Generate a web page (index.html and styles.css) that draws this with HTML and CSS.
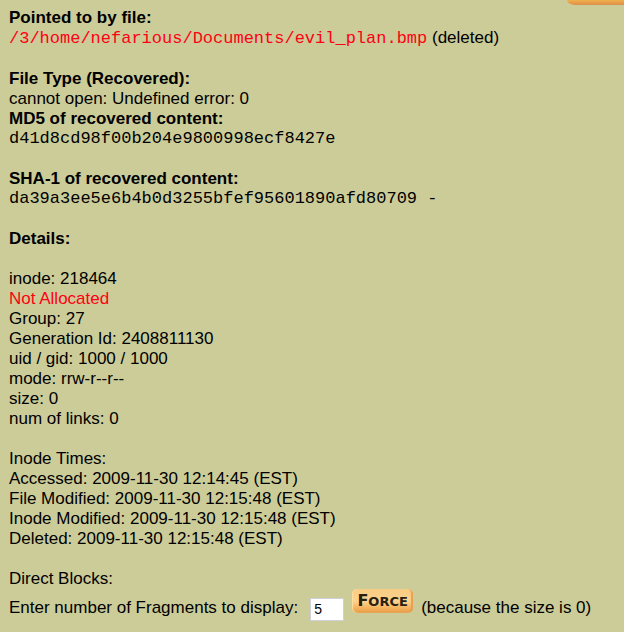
FILE: index.html
```html
<!DOCTYPE html>
<html lang="en">
<head>
<meta charset="utf-8">
<meta name="viewport" content="width=device-width, initial-scale=1">
<title>Inode 218464</title>
<link rel="stylesheet" href="styles.css">
</head>
<body>
<div class="tab-edge" aria-hidden="true"></div>
<main class="report">
  <section class="group">
    <h2>Pointed to by file:</h2>
    <p><span class="mono alert">/3/home/nefarious/Documents/evil_plan.bmp</span> (deleted)</p>
  </section>
  <section class="group">
    <h2>File Type (Recovered):</h2>
    <p>cannot open: Undefined error: 0</p>
    <h2>MD5 of recovered content:</h2>
    <p class="mono">d41d8cd98f00b204e9800998ecf8427e</p>
  </section>
  <section class="group">
    <h2>SHA-1 of recovered content:</h2>
    <p class="mono">da39a3ee5e6b4b0d3255bfef95601890afd80709 -</p>
  </section>
  <h2 class="group">Details:</h2>
  <section class="group">
    <p>inode: 218464</p>
    <p class="alert">Not Allocated</p>
    <p>Group: 27</p>
    <p>Generation Id: 2408811130</p>
    <p>uid / gid: 1000 / 1000</p>
    <p>mode: rrw-r--r--</p>
    <p>size: 0</p>
    <p>num of links: 0</p>
  </section>
  <section class="group">
    <p>Inode Times:</p>
    <p>Accessed: 2009-11-30 12:14:45 (EST)</p>
    <p>File Modified: 2009-11-30 12:15:48 (EST)</p>
    <p>Inode Modified: 2009-11-30 12:15:48 (EST)</p>
    <p>Deleted: 2009-11-30 12:15:48 (EST)</p>
  </section>
  <section>
    <p>Direct Blocks:</p>
    <form class="force-form">
      <label for="fragments">Enter number of Fragments to display:</label>
      <input id="fragments" class="count" type="text" value="5">
      <button class="force" type="button">F<span class="small-capitals">ORCE</span></button>
      <span>(because the size is 0)</span>
    </form>
  </section>
</main>
</body>
</html>
```
FILE: styles.css
```css
* {
  box-sizing: border-box;
}

body {
  margin: 0;
  background: #cccc99;
  color: #000;
  font: 17px/20px "Liberation Sans", Arial, sans-serif;
}

/* Bottom edge of the tab that hangs in from above the page */
.tab-edge {
  position: absolute;
  top: 0;
  right: 0;
  width: 57px;
  height: 5px;
  border-bottom-left-radius: 8px 5px;
  background: linear-gradient(#f0b050, #e79b48 60%, #d99050);
}

.report {
  padding: 8px 9px;
}

h2,
p {
  margin: 0;
  font-size: inherit;
  line-height: 20px;
}

.group {
  margin-bottom: 20px;
}

.mono {
  font-family: "Liberation Mono", "Courier New", monospace;
  line-height: 20px;
}

.alert {
  color: #ff0012;
}

.force-form {
  display: flex;
  align-items: center;
  height: 38px;
  white-space: nowrap;
}

.count {
  width: 34px;
  height: 23px;
  margin: 2px 8px 0 12px;
  padding: 0 3px;
  border: 1px solid #d0d0dc;
  background: #fff;
  color: #000;
  font: 14px "Liberation Sans", Arial, sans-serif;
}

.force {
  width: 61px;
  height: 24px;
  margin: 0 8px 14px 0;
  padding: 0;
  border: 0;
  border-radius: 5px;
  background: linear-gradient(#f8cb80, #fcd390 50%, #f3b25c 80%, #e79a48);
  box-shadow: inset 1px 0 1px #ffdf9f, inset -2px -1px 1px #e7a050;
  color: #29200f;
  font: 700 16px/22px "DejaVu Sans", sans-serif;
}

.small-capitals {
  font-size: 13px;
}
```
